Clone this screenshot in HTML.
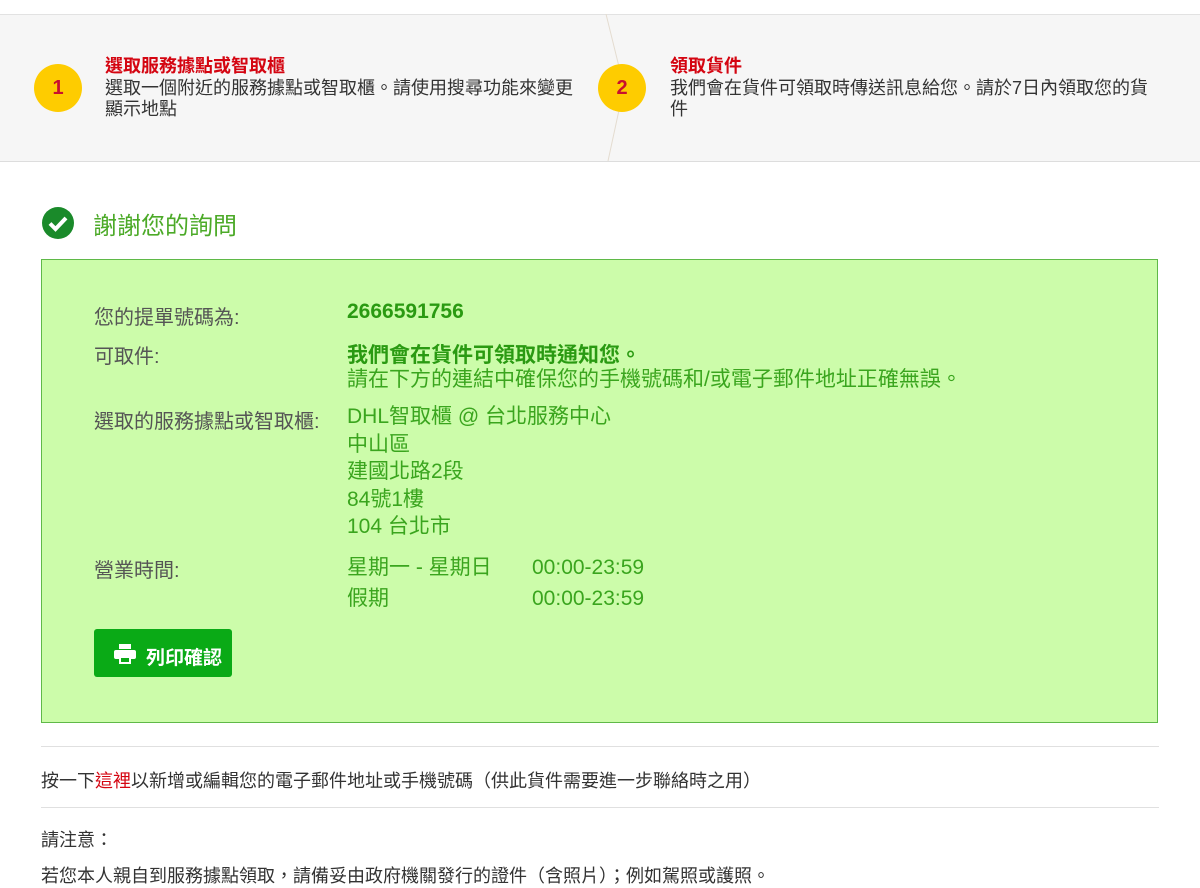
<!DOCTYPE html>
<html><head><meta charset="utf-8"><style>
body{margin:0;width:1200px;height:881px;overflow:hidden;background:#fff;font-family:"Liberation Sans","Noto Sans CJK TC",sans-serif;color:#333;position:relative}
.a{position:absolute}
.band{left:0;top:14px;width:1200px;height:146px;background:#f6f6f6;border-top:1px solid #e2e2e2;border-bottom:1px solid #ddd}
.circ{width:48px;height:48px;border-radius:50%;background:#fecc00;color:#c8102e;font-weight:bold;font-size:20px;text-align:center;line-height:48px}
.st{color:#d40511;font-size:18px;font-weight:bold;line-height:20px}
.sd{font-size:18px;line-height:21px;color:#333}
.box{left:41px;top:259px;width:1115px;height:462px;background:#ccfcaa;border:1px solid #5fb948}
.lb{font-size:20px;color:#555}
.gv{font-size:21px;color:#3aa51e;line-height:27px}
.hr{left:41px;width:1118px;height:1px;background:#e0e0e0}
</style></head><body>
<div class="a band"></div>
<svg class="a" style="left:600px;top:14px" width="30" height="147"><polyline points="6,0 24,73 8,147" fill="none" stroke="#e4dcd0" stroke-width="1"/></svg>
<div class="a circ" style="left:34px;top:64px">1</div>
<div class="a st" style="left:105px;top:56px">選取服務據點或智取櫃</div>
<div class="a sd" style="left:105px;top:78px;width:480px">選取一個附近的服務據點或智取櫃。請使用搜尋功能來變更顯示地點</div>
<div class="a circ" style="left:598px;top:64px">2</div>
<div class="a st" style="left:670px;top:56px">領取貨件</div>
<div class="a sd" style="left:670px;top:78px;width:490px">我們會在貨件可領取時傳送訊息給您。請於7日內領取您的貨件</div>
<svg class="a" style="left:41px;top:206px" width="34" height="34"><circle cx="17" cy="17" r="16" fill="#1a8a2a"/><path d="M9 17.5l5.5 5.5 10.5-11" fill="none" stroke="#fff" stroke-width="4"/></svg>
<div class="a" style="left:93px;top:206px;font-size:24px;color:#4caa28">謝謝您的詢問</div>
<div class="a box"></div>
<div class="a lb" style="left:94px;top:301px">您的提單號碼為:</div>
<div class="a" style="left:347px;top:300px;font-size:21px;font-weight:bold;color:#2a9a12">2666591756</div>
<div class="a lb" style="left:94px;top:340px">可取件:</div>
<div class="a" style="left:347px;top:339px;font-size:21px;font-weight:bold;color:#2a9a12">我們會在貨件可領取時通知您。</div>
<div class="a gv" style="left:347px;top:366px">請在下方的連結中確保您的手機號碼和/或電子郵件地址正確無誤。</div>
<div class="a lb" style="left:94px;top:405px">選取的服務據點或智取櫃:</div>
<div class="a gv" style="left:347px;top:403px;line-height:27.5px">DHL智取櫃 @ 台北服務中心<br>中山區<br>建國北路2段<br>84號1樓<br>104 台北市</div>
<div class="a lb" style="left:94px;top:554px">營業時間:</div>
<div class="a gv" style="left:347px;top:552px;line-height:31px">星期一 - 星期日<br>假期</div>
<div class="a gv" style="left:532px;top:552px;line-height:31px">00:00-23:59<br>00:00-23:59</div>
<div class="a" style="left:94px;top:629px;width:138px;height:48px;background:#0aaa16;border-radius:3px"></div>
<svg class="a" style="left:114px;top:644px" width="22" height="20"><rect x="5" y="0" width="12" height="5" fill="#fff"/><rect x="0" y="6" width="22" height="9" rx="2" fill="#fff"/><rect x="5" y="12" width="12" height="8" fill="#fff"/><rect x="7" y="14" width="8" height="4" fill="#0aaa16"/></svg>
<div class="a" style="left:146px;top:643px;font-size:19px;font-weight:bold;color:#fff">列印確認</div>
<div class="a hr" style="top:746px"></div>
<div class="a" style="left:41px;top:767px;font-size:18px;color:#333">按一下<span style="color:#d40511">這裡</span>以新增或編輯您的電子郵件地址或手機號碼（供此貨件需要進一步聯絡時之用）</div>
<div class="a hr" style="top:807px"></div>
<div class="a" style="left:41px;top:826px;font-size:18px">請注意：</div>
<div class="a" style="left:41px;top:862px;font-size:18px">若您本人親自到服務據點領取，請備妥由政府機關發行的證件（含照片）；例如駕照或護照。</div>
</body></html>
